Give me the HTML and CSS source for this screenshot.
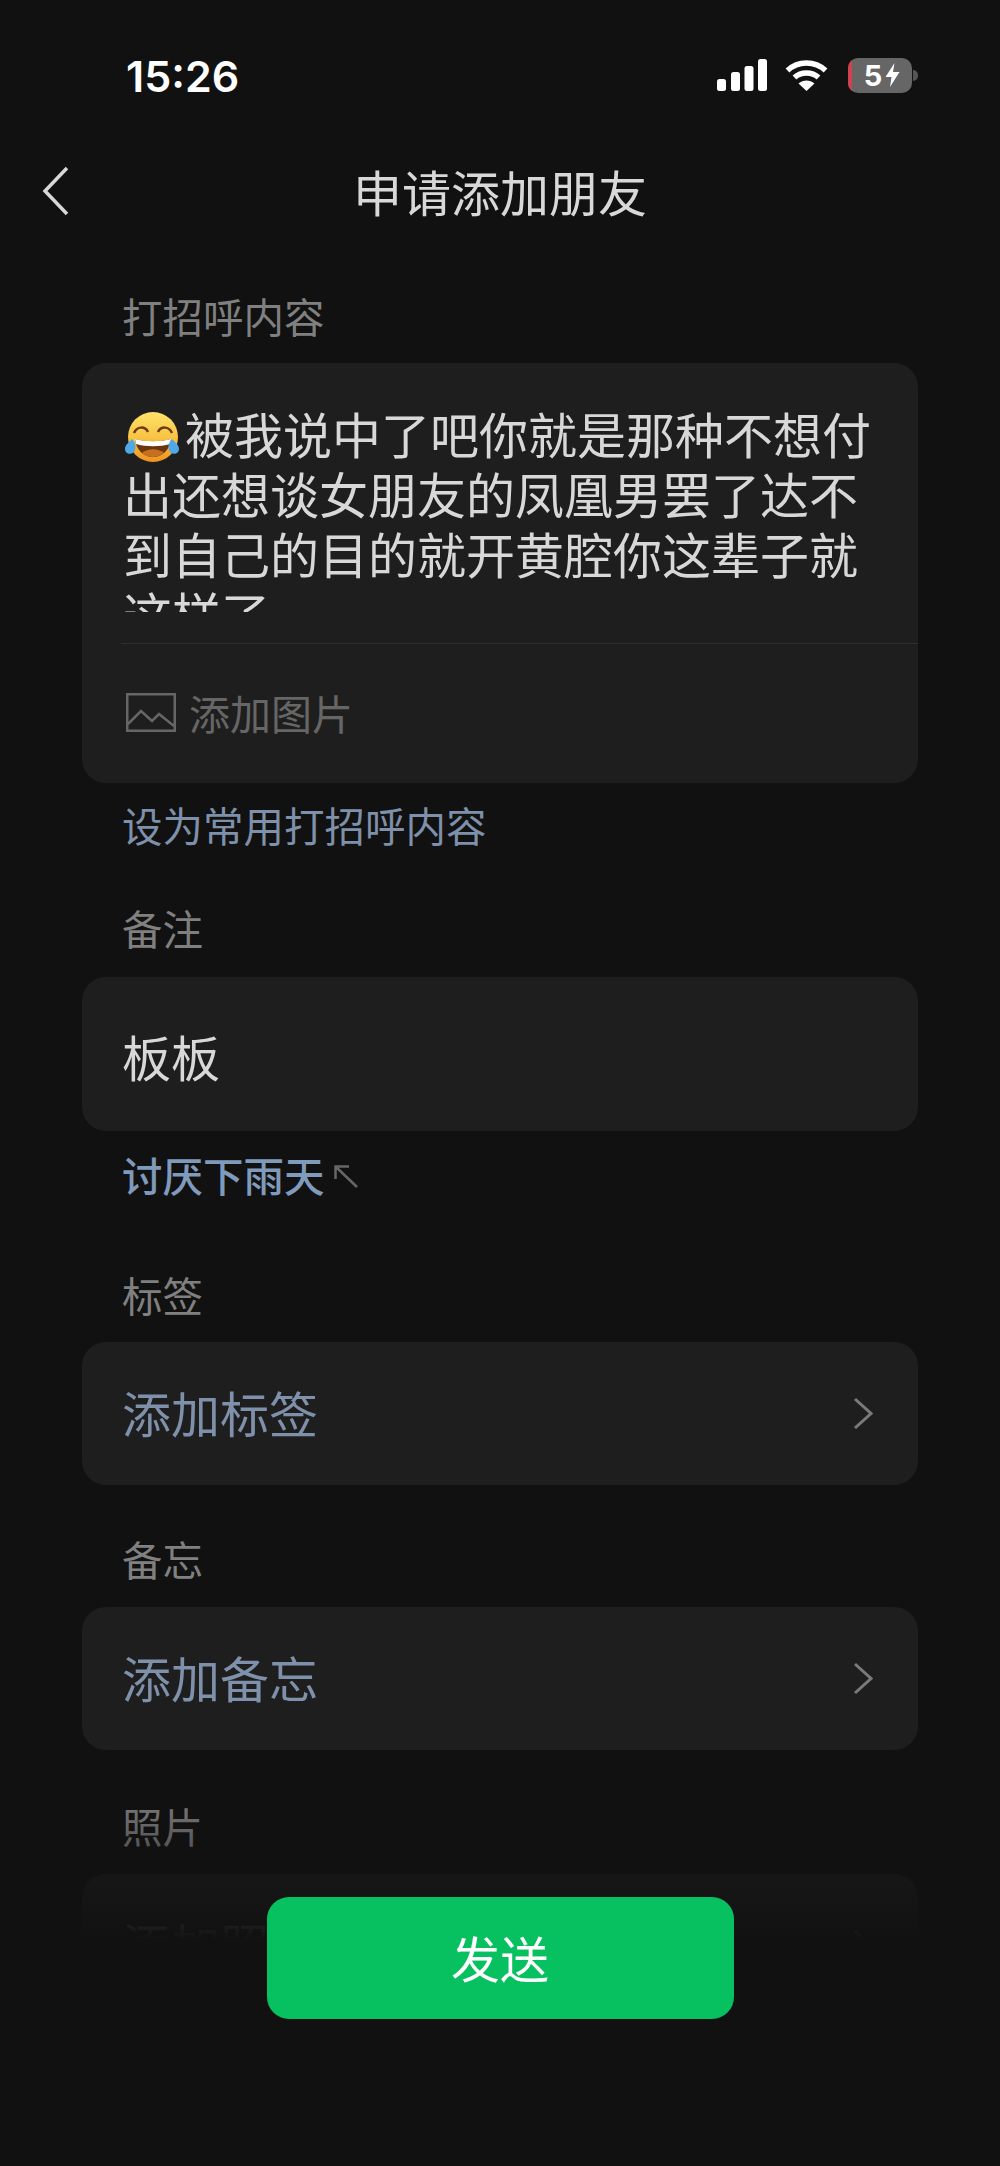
FILE: index.html
```html
<!DOCTYPE html>
<html lang="zh-CN">
<head>
    <meta charset="UTF-8">
    <meta name="viewport" content="width=device-width, initial-scale=1.0">
    <title>申请添加朋友</title>
    <link rel="stylesheet" href="styles.css">
</head>
<body>
    <div class="page">
        <!-- 状态栏 -->
        <div class="status-bar">
            <span class="time">15:26</span>
            <div class="status-icons">
                <svg class="signal" width="50" height="32" viewBox="0 0 50 32" fill="#fff">
                    <rect x="0" y="20" width="9" height="12" rx="2.5"/>
                    <rect x="14" y="13" width="9" height="19" rx="2.5"/>
                    <rect x="27.500" y="7" width="9" height="25" rx="2.5"/>
                    <rect x="41" y="0" width="9" height="32" rx="2.5"/>
                </svg>
                <svg class="wifi" width="43" height="32" viewBox="0 0 43 32" fill="none" stroke="#fff" stroke-width="5.500">
                    <path d="M2.500 11.500C13 1.500 30 1.500 40.500 11.500"/>
                    <path d="M9.500 18.500C16 12.500 27 12.500 33.500 18.500"/>
                    <path d="M21.500 32L13.500 24.500C18 20.500 25 20.500 29.500 24.500Z" fill="#fff" stroke="none"/>
                </svg>
                <div class="battery">
                    <span class="battery-low"></span>
                    <span class="battery-num">5</span>
                    <svg width="15" height="24" viewBox="0 0 14 24" fill="#fff">
                        <path d="M9 0L0 14H6L4.500 24L14 9H7.500Z"/>
                    </svg>
                </div>
                <span class="battery-nub"></span>
            </div>
        </div>

        <!-- 导航 -->
        <header class="nav">
            <svg class="back" width="30" height="50" viewBox="0 0 30 50" fill="none" stroke="#d8d8d8" stroke-width="3.500">
                <path d="M26 2L4 25L26 48"/>
            </svg>
            <h1>申请添加朋友</h1>
        </header>

        <div class="label label-first">打招呼内容</div>
        <div class="card greet-card">
            <div class="greet-text"><svg class="emoji" width="54" height="50" viewBox="0 0 54 50">
                    <defs>
                        <linearGradient id="faceFill" x1="0" y1="0" x2="0" y2="1">
                            <stop offset="0" stop-color="#fde36a"/>
                            <stop offset="0.6" stop-color="#f9bd3c"/>
                            <stop offset="1" stop-color="#ee9220"/>
                        </linearGradient>
                    </defs>
                    <circle cx="28" cy="25" r="25" fill="url(#faceFill)"/>
                    <path d="M9 21C12 14 20 14 23 20" fill="none" stroke="#6b3a12" stroke-width="2.500"/>
                    <path d="M33 20C36 14 44 14 47 21" fill="none" stroke="#6b3a12" stroke-width="2.500"/>
                    <path d="M10 27C21 30 35 30 46 27C45 38 37 45 28 45C19 45 11 38 10 27Z" fill="#6a3610"/>
                    <path d="M10 27C21 30 35 30 46 27L45 32C35 35 21 35 11 32Z" fill="#fff"/>
                    <path d="M17 41C23 36 33 36 39 41C35 44 32 45 28 45C24 45 20 44 17 41Z" fill="#c4701f"/>
                    <path d="M7 27C11 31 12 37 8 41C4 43 0 41 0 37C0 33 4 30 7 27Z" fill="#4fa9e6"/>
                    <path d="M47 27C43 31 42 37 46 41C50 43 54 41 54 37C54 33 50 30 47 27Z" fill="#4fa9e6"/>
                </svg>被我说中了吧你就是那种不想付出还想谈女朋友的凤凰男罢了达不到自己的目的就开黄腔你这辈子就这样了</div>
            <div class="add-pic">
                <svg width="50" height="39" viewBox="0 0 50 39" fill="none" stroke="#666" stroke-width="2.500">
                    <rect x="1.250" y="1.250" width="47.500" height="36.500"/>
                    <path d="M2 31L15 18L26 28L33 21L48 33"/>
                </svg>
                <span>添加图片</span>
            </div>
        </div>
        <a class="link link-greet">设为常用打招呼内容</a>

        <div class="label label-remark">备注</div>
        <div class="card remark-card">板板</div>
        <div class="nick-row">
            <a class="link link-bold">讨厌下雨天</a>
            <svg class="nick-arrow" width="25" height="23" viewBox="0 0 25 23" fill="none" stroke="#666" stroke-width="2.500">
                <path d="M1.500 14V1.500H15M1.500 1.500L23 22"/>
            </svg>
        </div>

        <div class="label label-tag">标签</div>
        <div class="card row-card">
            <span>添加标签</span>
            <svg class="arrow" width="20" height="33" viewBox="0 0 20 33" fill="none" stroke="#7a7a7a" stroke-width="3">
                <path d="M2 2L18 16.500L2 31"/>
            </svg>
        </div>

        <div class="label label-memo">备忘</div>
        <div class="card row-card">
            <span>添加备忘</span>
            <svg class="arrow" width="20" height="33" viewBox="0 0 20 33" fill="none" stroke="#7a7a7a" stroke-width="3">
                <path d="M2 2L18 16.500L2 31"/>
            </svg>
        </div>

        <div class="label label-photo">照片</div>
        <div class="card row-card">
            <span>添加照片</span>
            <svg class="arrow" width="20" height="33" viewBox="0 0 20 33" fill="none" stroke="#7a7a7a" stroke-width="3">
                <path d="M2 2L18 16.500L2 31"/>
            </svg>
        </div>

        <!-- 底部按钮盖在内容上 -->
        <div class="footer">
            <button class="send-btn">发送</button>
        </div>
    </div>
</body>
</html>
```

FILE: styles.css
```css
* {
    margin: 0;
    padding: 0;
    box-sizing: border-box;
}
body {
    font-family: "Noto Sans CJK SC", "Liberation Sans", sans-serif;
    background-color: #111111;
}
.page {
    position: relative;
    height: 2166px;
    overflow: hidden;
    padding: 0 82px;
}
.status-bar {
    display: flex;
    justify-content: space-between;
    align-items: center;
    height: 135px;
    margin: 0 0 0 44px;
    padding-top: 15px;
}
.time {
    margin-top: 2px;
    font-family: Inter, "Liberation Sans", sans-serif;
    font-size: 43px;
    font-weight: 600;
    color: #fff;
    line-height: 1;
}
.status-icons {
    display: flex;
    align-items: center;
    margin-right: 0;
}
.signal {
    margin-right: 18px;
}
.wifi {
    margin-right: 20px;
}
.battery {
    display: flex;
    align-items: center;
    justify-content: center;
    gap: 3px;
    position: relative;
    overflow: hidden;
    width: 64px;
    height: 35px;
    padding-left: 4px;
    border-radius: 10px;
    background-color: #666;
}
.battery-low {
    position: absolute;
    left: 0;
    top: 0;
    bottom: 0;
    width: 4px;
    background-color: #d0424f;
}
.battery-num {
    font-family: Inter, "Liberation Sans", sans-serif;
    font-size: 29px;
    font-weight: 700;
    line-height: 1;
    color: #fff;
}
.battery-nub {
    width: 5px;
    height: 11px;
    margin-left: 1px;
    border-radius: 0 5px 5px 0;
    background-color: #555;
}
.nav {
    position: relative;
    display: flex;
    align-items: center;
    justify-content: center;
    height: 110px;
    margin: 0 -82px;
}
.nav h1 {
    font-size: 49px;
    font-weight: 400;
    line-height: 1;
    color: #d8d8d8;
}
.back {
    position: absolute;
    left: 41px;
    top: 31px;
}
.label {
    height: 56px;
    padding-left: 40px;
    font-size: 40.5px;
    line-height: 51px;
    color: #808080;
}
.label-first {
    margin-top: 45px;
    margin-bottom: 17px;
}
.label-remark {
    margin-top: 47px;
    margin-bottom: 19px;
}
.label-tag {
    margin-top: 64px;
    margin-bottom: 17px;
}
.label-memo {
    margin-top: 48px;
    margin-bottom: 18px;
}
.label-photo {
    margin-top: 50px;
    margin-bottom: 18px;
}
.card {
    border-radius: 24px;
    background-color: #1e1e1e;
}
.greet-card {
    height: 420px;
    padding-top: 40px;
    padding-left: 41px;
}
.greet-text {
    width: 756px;
    height: 209px;
    overflow: hidden;
    font-size: 49px;
    line-height: 60px;
    color: #d8d8d8;
}
.emoji {
    display: inline-block;
    width: 54px;
    height: 50px;
    margin-left: 2px;
    margin-right: 6px;
    vertical-align: -8px;
}
.add-pic {
    display: flex;
    align-items: center;
    gap: 13px;
    height: 140px;
    margin-top: 31px;
    margin-left: -2px;
    padding-left: 5px;
    padding-bottom: 3px;
    border-top: 1px solid #2e2e2e;
    font-size: 41px;
    color: #666;
}
.link {
    display: block;
    height: 56px;
    font-size: 40.5px;
    line-height: 51px;
    color: #7e90aa;
}
.link-greet {
    margin-top: 16px;
    padding-left: 40px;
}
.remark-card {
    height: 154px;
    padding-left: 40px;
    font-size: 49px;
    line-height: 157px;
    color: #d8d8d8;
}
.nick-row {
    display: flex;
    align-items: center;
    gap: 9px;
    margin-top: 18px;
    padding-left: 40px;
}
.nick-arrow {
    margin-top: -2px;
}
.link-bold {
    font-weight: 500;
    color: #7f9abb;
}
.row-card {
    display: flex;
    justify-content: space-between;
    align-items: center;
    height: 143px;
    padding: 0 45px 0 40px;
    font-size: 49px;
    color: #7e90aa;
}
.row-card span {
    margin-top: -5px;
}
.footer {
    position: absolute;
    left: 0;
    right: 0;
    bottom: 0;
    display: flex;
    justify-content: center;
    align-items: flex-start;
    height: 376px;
    padding-top: 107px;
    background: linear-gradient(to bottom, rgba(17,17,17,0) 0, #111111 150px);
}
.send-btn {
    width: 467px;
    height: 122px;
    padding-bottom: 4px;
    border: none;
    border-radius: 22px;
    background-color: #07c160;
    font-family: "Noto Sans CJK SC", sans-serif;
    font-size: 49px;
    color: #fff;
}
```
